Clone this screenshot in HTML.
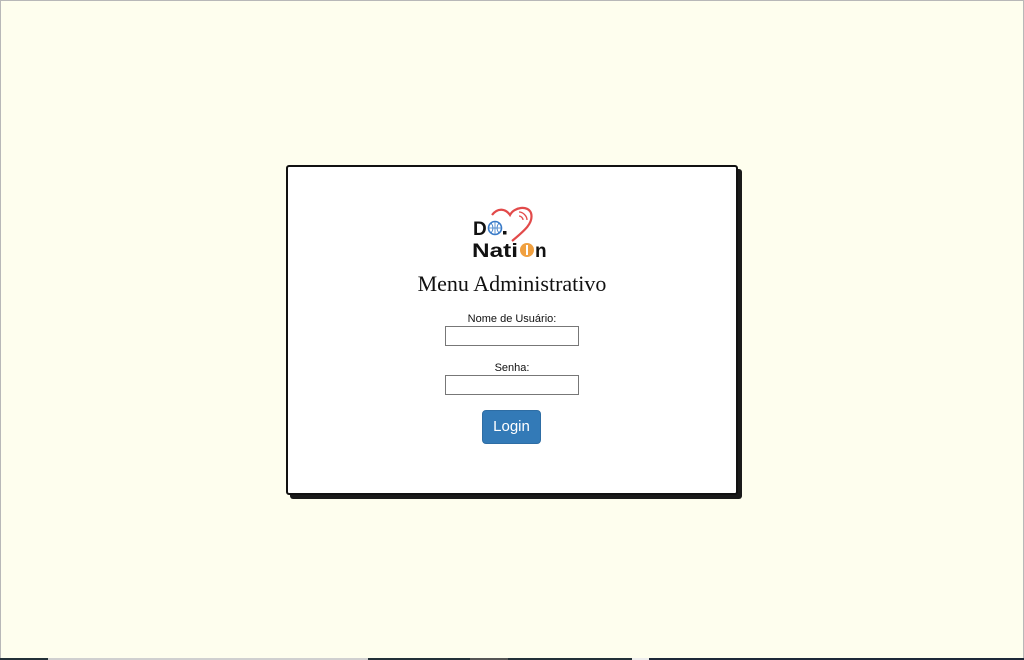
<!DOCTYPE html>
<html><head><meta charset="utf-8">
<style>
html,body{margin:0;padding:0;}
body{width:1024px;height:660px;background:#fefeee;position:relative;overflow:hidden;font-family:"Liberation Sans",sans-serif;}
.frame{position:absolute;left:0;top:0;width:1022px;height:657px;border:1px solid #b8b8b8;border-bottom:none;}
.bar{position:absolute;top:658px;height:2px;}
.card{position:absolute;left:286px;top:165px;width:448px;height:326px;background:#fff;border:2px solid #111;border-radius:3px;box-shadow:4px 4px 0 #1a1a1a;}
.logo{position:absolute;left:184px;top:38px;}
h1{position:absolute;left:0;width:448px;top:104px;margin:0;text-align:center;font-family:"Liberation Serif",serif;font-weight:normal;font-size:22px;color:#111;}
.lbl{position:absolute;left:0;width:448px;text-align:center;font-size:11px;color:#111;}
.inp{position:absolute;left:157px;width:132px;height:18px;border:1px solid #777;background:#fff;}
.btn{position:absolute;left:194px;top:243px;width:59px;height:34px;background:#337ab7;border:1px solid #2e6da4;border-radius:4px;color:#fff;font-size:15px;text-align:center;line-height:32px;box-sizing:border-box;}
</style></head><body>
<div class="frame"></div>
<div class="bar" style="left:0;width:48px;background:#233038"></div>
<div class="bar" style="left:48px;width:320px;background:#d0d0d0"></div>
<div class="bar" style="left:368px;width:264px;background:#223038"></div>
<div class="bar" style="left:470px;width:38px;background:#555"></div>
<div class="bar" style="left:632px;width:17px;background:#eee"></div>
<div class="bar" style="left:649px;width:375px;background:#1d2838"></div>
<div class="card">
  <svg class="logo" width="82" height="58" viewBox="0 0 82 58">
    <path d="M20 10 C26 2 34 4 38 10 C42 2 56 0 59 8 C62 18 52 26 40 36" fill="none" stroke="#e24a4a" stroke-width="2.2"/>
    <path d="M47 7 C51 7 55 11 55 15 M47 11 C49 11 51 13 51 15" fill="none" stroke="#e24a4a" stroke-width="1.3"/>
    <text x="1" y="30" font-family="Liberation Sans,sans-serif" font-weight="bold" font-size="19" fill="#111">D</text>
    <circle cx="23" cy="23" r="6.5" fill="#fff" stroke="#3a7bc8" stroke-width="1.6"/>
    <path d="M16.5 23 H29.5 M23 16.5 V29.5 M19 18 Q23 23 19 28 M27 18 Q23 23 27 28" stroke="#3a7bc8" stroke-width="0.8" fill="none"/>
    <rect x="31" y="26" width="3.5" height="3.5" fill="#111"/>
    <text x="0" y="52" font-family="Liberation Sans,sans-serif" font-weight="bold" font-size="19" fill="#111" textLength="46" lengthAdjust="spacingAndGlyphs">Nati</text>
    <circle cx="55" cy="45" r="7" fill="#f0a040"/>
    <rect x="54" y="40" width="2" height="10" fill="#fff"/>
    <text x="63" y="52" font-family="Liberation Sans,sans-serif" font-weight="bold" font-size="19" fill="#111">n</text>
  </svg>
  <h1>Menu Administrativo</h1>
  <div class="lbl" style="top:146px">Nome de Usuário:</div>
  <div class="inp" style="top:159px"></div>
  <div class="lbl" style="top:195px">Senha:</div>
  <div class="inp" style="top:208px"></div>
  <div class="btn">Login</div>
</div>
</body></html>
